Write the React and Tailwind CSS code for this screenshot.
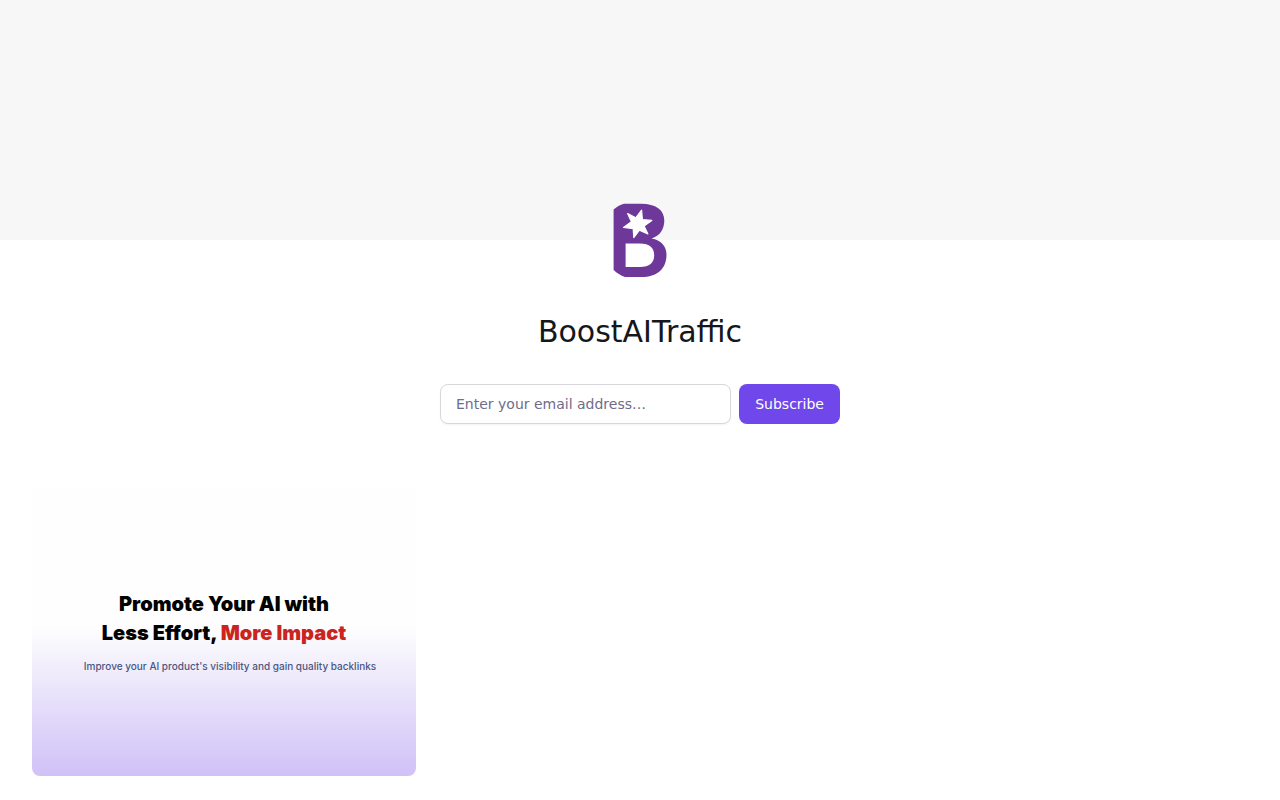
import { useState } from "react";

function Logo() {
  return (
    <svg viewBox="0 0 80 80" className="size-20" role="img" aria-label="BoostAITraffic logo">
      <path
        fill="#6d389a"
        fillRule="evenodd"
        d="M13.6 9.5C16.5 7 20 5 24 3.8H41C56 3.8 64.3 10 64.3 20.5C64.3 29 60 36 51.5 38.4C61 40 66.5 46 66.5 54.5C66.5 69 57 77.1 41.5 77.1H25C20.5 75.4 17 73 13.6 70ZM25.6 43.4V67H40C49.5 67 54.2 62.7 54.2 55.2C54.2 47.5 49.5 43.4 40 43.4Z"
      />
      <path
        fill="#fff"
        stroke="#fff"
        strokeWidth="1.2"
        strokeLinejoin="round"
        d="M27.6 13.6L35.8 17.8L41.6 10.2L42.4 19.5L51.8 20.4L44.1 26L47.9 34L39.4 30.2L33.8 37.6L33.2 28.6L23.5 27.5L31.4 21.8Z"
      />
    </svg>
  );
}

function PostCard() {
  return (
    <a
      href="#post"
      className="flex aspect-4/3 flex-col items-center rounded-lg bg-linear-to-b from-[#fefefe] from-48% via-[#ece7fb] via-68% to-[#d0c1f7] pt-[102px] text-center font-['Inter',sans-serif]"
    >
      <h2 className="text-xl leading-[29px] font-black text-black">
        Promote Your AI with
        <br />
        Less Effort, <span className="text-[#cc241d]">More Impact</span>
      </h2>
      <p className="mt-2 pl-3 text-[10px] leading-5 font-medium text-[#4a5680]">
        Improve your AI product's visibility and gain quality backlinks
      </p>
    </a>
  );
}

export default function App() {
  const [email, setEmail] = useState("");

  return (
    <div className="min-h-screen bg-white font-['DejaVu_Sans',sans-serif] text-[#15171a]">
      <div className="h-60 bg-[#f7f7f7]" />

      <header className="-mt-10 flex flex-col items-center px-8">
        <Logo />
        <h1 className="mt-8 text-3xl leading-10">BoostAITraffic</h1>
        <form
          className="mt-8 flex w-full max-w-[400px] gap-2"
          onSubmit={(e) => e.preventDefault()}
        >
          <input
            type="email"
            aria-label="Email address"
            placeholder="Enter your email address…"
            value={email}
            onChange={(e) => setEmail(e.target.value)}
            className="h-10 min-w-0 flex-1 rounded-lg border border-[#d7d7dc] bg-white px-[15px] text-sm shadow-xs outline-none placeholder:text-[#6f6c8b]"
          />
          <button
            type="submit"
            className="h-10 rounded-lg bg-[#7047eb] px-4 text-sm text-white"
          >
            Subscribe
          </button>
        </form>
      </header>

      <main className="mt-16 grid grid-cols-1 gap-8 px-8 pb-6 sm:grid-cols-2 lg:grid-cols-3">
        <PostCard />
      </main>
    </div>
  );
}
